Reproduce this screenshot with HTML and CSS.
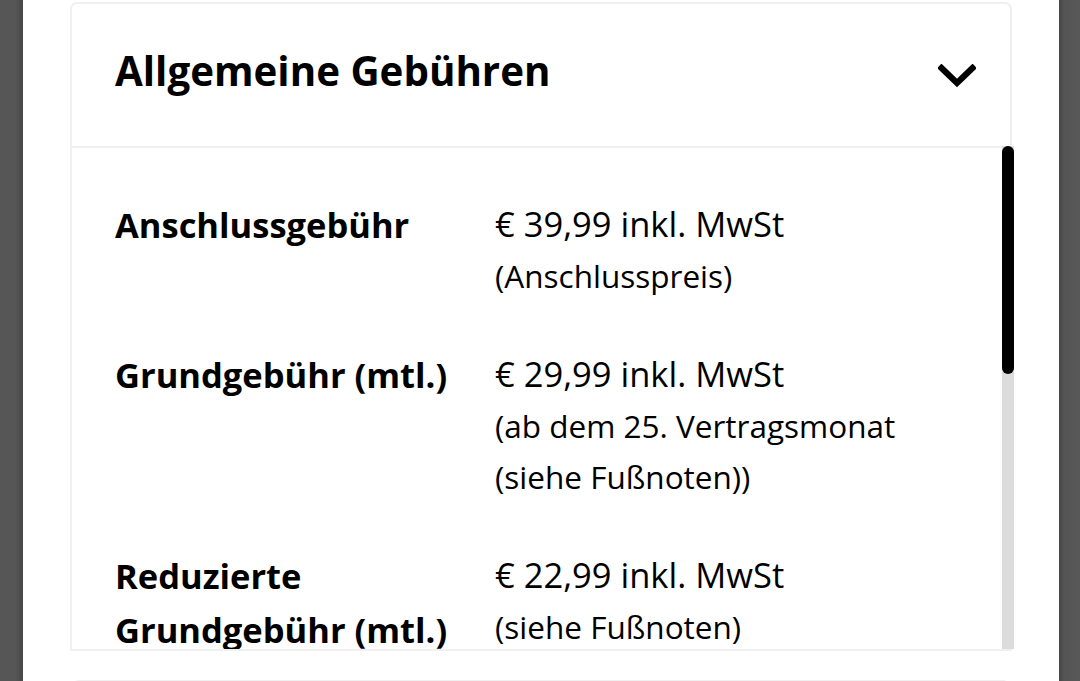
FILE: index.html
```html
<!DOCTYPE html>
<html lang="de">
<head>
<meta charset="utf-8">
<link rel="stylesheet" href="styles.css">
</head>
<body>
<div class="screen">
  <div class="edge edge-left"></div>
  <main class="sheet">
    <section class="card">
      <header class="card-head">
        <h2 class="card-title">Allgemeine Gebühren</h2>
        <svg class="chevron" width="38" height="24" viewBox="0 0 38 24"><path d="M3.5 4 L19 19 L34.5 4" fill="none" stroke="#000" stroke-width="6.2" stroke-linecap="square"/></svg>
      </header>
      <div class="card-body">
        <div class="rows">
          <div class="row">
            <div class="label">Anschlussgebühr</div>
            <div class="value"><div class="price">€ 39,99 inkl. MwSt</div><div class="note">(Anschlusspreis)</div></div>
          </div>
          <div class="row">
            <div class="label">Grundgebühr (mtl.)</div>
            <div class="value"><div class="price">€ 29,99 inkl. MwSt</div><div class="note">(ab dem 25. Vertragsmonat (siehe Fußnoten))</div></div>
          </div>
          <div class="row">
            <div class="label">Reduzierte Grundgebühr (mtl.)</div>
            <div class="value"><div class="price">€ 22,99 inkl. MwSt</div><div class="note">(siehe Fußnoten)</div></div>
          </div>
        </div>
        <div class="scrollbar"><div class="thumb"></div></div>
      </div>
    </section>
    <section class="card next"></section>
  </main>
  <div class="edge edge-right"></div>
</div>
</body>
</html>
```
FILE: styles.css
```css
* { box-sizing: border-box; }
html, body { margin: 0; padding: 0; height: 100%; overflow: hidden; background: #fff; }
body { font-family: "Open Sans", "Noto Sans", sans-serif; color: #000; }
.screen { display: flex; height: 681px; width: 1080px; }
.edge { flex: none; background: #555; }
.edge-left { width: 23px; background: linear-gradient(to right, #565656 0, #555 16px, #454545 23px); }
.edge-right { width: 21px; background: linear-gradient(to right, #444 0, #555 5px, #585858 21px); }
.sheet { flex: 1; background: #fff; padding: 2px 47px 0 47px; display: flex; flex-direction: column; gap: 29px; overflow: hidden; }
.card { width: 942px; flex: none; }
.card-head { height: 144px; border: 2px solid #f0f0f0; border-bottom: none; border-radius: 7px 7px 0 0; display: flex; align-items: center; justify-content: space-between; padding: 0 34px 0 43px; }
.card-title { margin: 0; font-size: 40.3px; font-weight: 700; line-height: 1; margin-top: -8px; }
.chevron { display: block; margin-top: 2px; }
.card-body { height: 505px; display: flex; border-top: 2px solid #f0f0f0; border-left: 2px solid #f0f0f0; border-bottom: 2px solid #f0f0f0; }
.rows { flex: 1; padding: 50px 0 0 43px; display: flex; flex-direction: column; gap: 47px; overflow: hidden; }
.row { display: flex; }
.label { width: 380px; flex: none; font-size: 34.5px; font-weight: 700; line-height: 54px; padding-right: 20px; }
.value { flex: 1; font-size: 34.5px; }
.price { line-height: 52px; }
.note { font-size: 31.5px; line-height: 51px; width: 430px; }
.scrollbar { width: 12px; flex: none; background: #dcdcdc; margin-right: -2px; margin-top: -2px; }
.thumb { height: 228px; background: #000; border-radius: 6px; }
.next { height: 40px; border: 2px solid #f0f0f0; border-radius: 7px 7px 0 0; margin-left: 2px; width: 938px; }
```
